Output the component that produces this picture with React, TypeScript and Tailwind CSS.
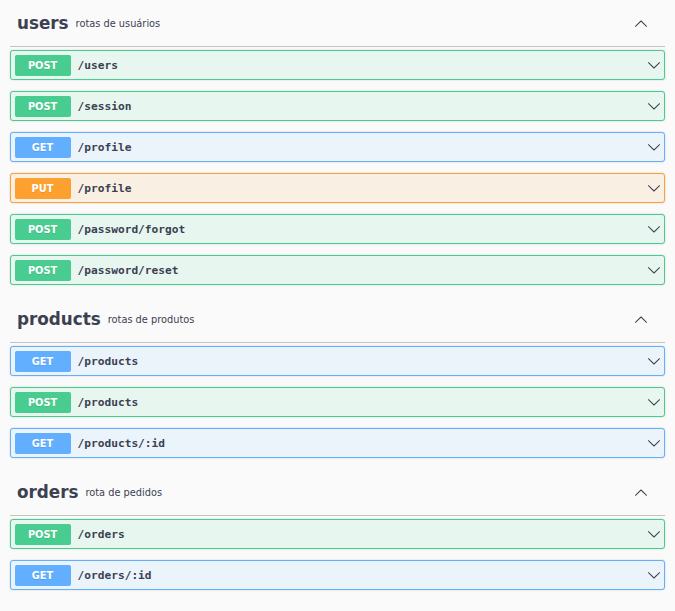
const sections = [
  {
    name: "users",
    description: "rotas de usuários",
    routes: [
      { method: "POST", path: "/users" },
      { method: "POST", path: "/session" },
      { method: "GET", path: "/profile" },
      { method: "PUT", path: "/profile" },
      { method: "POST", path: "/password/forgot" },
      { method: "POST", path: "/password/reset" },
    ],
  },
  {
    name: "products",
    description: "rotas de produtos",
    routes: [
      { method: "GET", path: "/products" },
      { method: "POST", path: "/products" },
      { method: "GET", path: "/products/:id" },
    ],
  },
  {
    name: "orders",
    description: "rota de pedidos",
    routes: [
      { method: "POST", path: "/orders" },
      { method: "GET", path: "/orders/:id" },
    ],
  },
];

const methodStyles: Record<string, { block: string; badge: string }> = {
  POST: { block: "bg-[#e8f6f0] border-[#49cc90]", badge: "bg-[#49cc90]" },
  GET: { block: "bg-[#ebf3fb] border-[#61affe]", badge: "bg-[#61affe]" },
  PUT: { block: "bg-[#f9efe2] border-[#fca130]", badge: "bg-[#fca130]" },
};

function Arrow({ up = false }: { up?: boolean }) {
  return (
    <svg
      width="14"
      height="14"
      viewBox="0 0 20 20"
      className={up ? "rotate-180" : ""}
      fill="#3b4151"
    >
      <path d="M17.418 6.109c.272-.268.709-.268.979 0s.271.701 0 .969l-7.908 7.83c-.27.268-.707.268-.979 0l-7.908-7.83c-.27-.268-.27-.701 0-.969.271-.268.709-.268.979 0L10 13.25l7.418-7.141z" />
    </svg>
  );
}

function Route({ method, path }: { method: string; path: string }) {
  const s = methodStyles[method];
  return (
    <div
      className={`flex items-center h-[30px] border rounded-[3px] px-[3.5px] shadow-[0_0_2px_rgba(0,0,0,0.19)] ${s.block}`}
    >
      <span
        className={`w-[56px] h-[21px] pt-[2px] flex items-center justify-center rounded-[2px] text-white font-bold text-[9.8px] [text-shadow:0_1px_0_rgba(0,0,0,0.1)] ${s.badge}`}
      >
        {method}
      </span>
      <span className="flex-1 px-[7px] pt-[3px] font-['DejaVu_Sans_Mono',monospace] font-bold text-[11.2px] text-[#3b4151]">
        {path}
      </span>
      <Arrow />
    </div>
  );
}

export default function App() {
  return (
    <div className="min-h-screen bg-[#fafafa] px-[10px] font-['DejaVu_Sans',sans-serif] text-[#3b4151]">
      {sections.map((section) => (
        <section key={section.name}>
          <div className="flex items-center h-[47px] pt-[2px] border-b border-[#3b4151]/30 pl-[7px] pr-[17px]">
            <span className="font-bold text-[16.8px]">{section.name}</span>
            <span className="flex-1 px-[7px] text-[9.8px]">{section.description}</span>
            <Arrow up />
          </div>
          <div className="flex flex-col gap-[11px] pt-[3px] pb-[11px]">
            {section.routes.map((r, i) => (
              <Route key={i} method={r.method} path={r.path} />
            ))}
          </div>
        </section>
      ))}
    </div>
  );
}
